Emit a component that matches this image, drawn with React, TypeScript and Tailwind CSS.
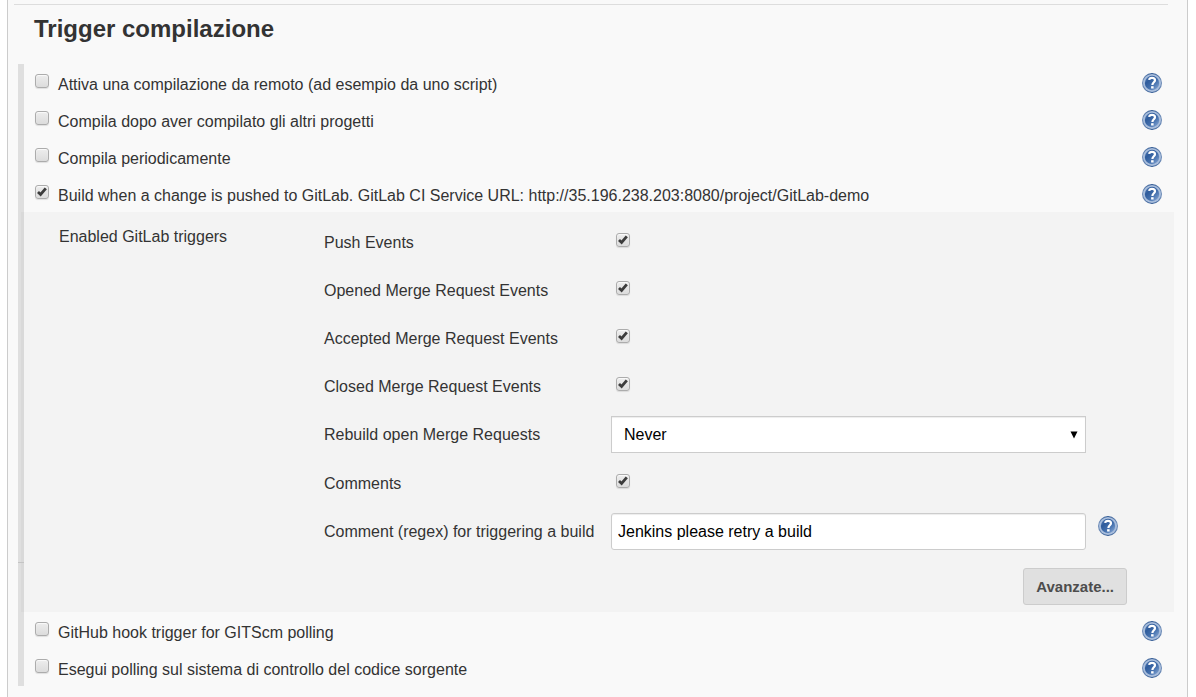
import { useState } from "react";
import type { ReactNode } from "react";

function HelpIcon({ id }: { id: string }) {
  return (
    <svg viewBox="0 0 20 20" className="block size-5" aria-hidden="true">
      <defs>
        <linearGradient id={`${id}-disc`} x1="0" y1="0" x2="1" y2="1">
          <stop offset="0" stopColor="#5f86bd" />
          <stop offset="0.3" stopColor="#2f5c9c" />
          <stop offset="0.6" stopColor="#4571ae" />
          <stop offset="1" stopColor="#90aed8" />
        </linearGradient>
        <linearGradient id={`${id}-rim`} x1="0" y1="0" x2="1" y2="0">
          <stop offset="0" stopColor="#6f8db8" />
          <stop offset="0.5" stopColor="#2b5590" />
          <stop offset="1" stopColor="#6f8db8" />
        </linearGradient>
      </defs>
      <circle cx="10" cy="10" r="10" fill={`url(#${id}-rim)`} />
      <circle cx="10" cy="10" r="9" fill="#a9bedc" />
      <circle cx="10" cy="10" r="7.2" fill={`url(#${id}-disc)`} />
      <path
        d="M7.1 6.9C7.4 5.3 8.5 4.8 10 4.8C11.9 4.8 13 5.8 13 7.3C13 9.3 10.4 9.4 10.4 12"
        fill="none"
        stroke="#fff"
        strokeWidth="2.2"
      />
      <rect x="9.1" y="13.2" width="2.5" height="2.3" fill="#fff" />
    </svg>
  );
}

function HelpLink({ id, about }: { id: string; about: string }) {
  return (
    <a href={`#help-${id}`} aria-label={`Help for feature: ${about}`} className="shrink-0">
      <HelpIcon id={id} />
    </a>
  );
}

function Checkbox({ id, defaultChecked = false }: { id: string; defaultChecked?: boolean }) {
  const [checked, setChecked] = useState(defaultChecked);
  return (
    <span className="grid size-3.5 shrink-0">
      <input
        id={id}
        type="checkbox"
        checked={checked}
        onChange={(e) => setChecked(e.target.checked)}
        className="col-start-1 row-start-1 size-3.5 appearance-none rounded-[3px] border border-[#acacac] bg-linear-to-b from-[#ededed] to-[#dcdcdc] shadow-[0_1px_1px_rgba(0,0,0,0.1),inset_0_1px_1px_rgba(255,255,255,0.75)]"
      />
      {checked && (
        <svg viewBox="0 0 14 14" className="pointer-events-none col-start-1 row-start-1 size-3.5" aria-hidden="true">
          <path d="M3 7L5.6 9.5L10.8 3.4" fill="none" stroke="#3c3c3c" strokeWidth="2.8" />
        </svg>
      )}
    </span>
  );
}

function TriggerRow({ id, label, checked }: { id: string; label: string; checked?: boolean }) {
  return (
    <div className="flex h-[37px] items-start pr-3 pl-[11px]">
      <div className="pt-2.5">
        <Checkbox id={id} defaultChecked={checked} />
      </div>
      <label htmlFor={id} className="flex-1 pt-[9px] pl-[9px] leading-6">
        {label}
      </label>
      <div className="pt-[9px]">
        <HelpLink id={`${id}-help`} about={label} />
      </div>
    </div>
  );
}

function Setting({ id, label, children }: { id: string; label: string; children: ReactNode }) {
  return (
    <div className="flex">
      <label htmlFor={id} className="w-[288px] shrink-0 pt-[13px] leading-6">
        {label}
      </label>
      <div className="min-h-12 min-w-0 flex-1 py-1.5">{children}</div>
    </div>
  );
}

function EventSetting({ id, label }: { id: string; label: string }) {
  return (
    <Setting id={id} label={label}>
      <div className="pt-[9px] pl-1">
        <Checkbox id={id} defaultChecked />
      </div>
    </Setting>
  );
}

const events = [
  { id: "push", label: "Push Events" },
  { id: "opened", label: "Opened Merge Request Events" },
  { id: "accepted", label: "Accepted Merge Request Events" },
  { id: "closed", label: "Closed Merge Request Events" },
];

function GitLabPanel() {
  return (
    <div className="relative -ml-[3px] bg-black/[0.024] pt-1.5 pr-[47px] pb-[7px] pl-[38px]">
      <span className="absolute bottom-[49px] -left-[3px] h-px w-1.5 bg-[#c4c4c4]" />
      <div className="flex">
        <div className="w-[265px] shrink-0 pt-[7px] leading-6">Enabled GitLab triggers</div>
        <div className="min-w-0 flex-1">
          {events.map((e) => (
            <EventSetting key={e.id} id={e.id} label={e.label} />
          ))}
          <Setting id="rebuild" label="Rebuild open Merge Requests">
            <div className="mr-[41px] -ml-px grid items-center">
              <select
                id="rebuild"
                defaultValue="Never"
                className="col-start-1 row-start-1 h-[37px] w-full appearance-none border border-[#ccc] bg-white px-3 pt-px text-black shadow-[inset_0_1px_1px_rgba(0,0,0,0.075)]"
              >
                <option>Never</option>
                <option>On push to source branch</option>
                <option>On push to source or target branch</option>
              </select>
              <svg
                viewBox="0 0 8 8"
                className="pointer-events-none col-start-1 row-start-1 mr-2 size-2 justify-self-end"
                aria-hidden="true"
              >
                <path d="M0.5 0.5H7.5L4 7.5Z" fill="#000" />
              </svg>
            </div>
          </Setting>
          <EventSetting id="comments" label="Comments" />
          <Setting id="regex" label="Comment (regex) for triggering a build">
            <div className="mr-[9px] -ml-px flex items-start gap-3">
              <input
                id="regex"
                type="text"
                defaultValue="Jenkins please retry a build"
                className="h-[37px] min-w-0 flex-1 rounded-[3px] border border-[#ccc] bg-white px-1.5 text-black shadow-[inset_0_1px_1px_rgba(0,0,0,0.075)]"
              />
              <div className="pt-[3px]">
                <HelpLink id="regex-help" about="Comment (regex) for triggering a build" />
              </div>
            </div>
          </Setting>
        </div>
      </div>
      <div className="flex justify-end pt-3">
        <button
          type="button"
          className="h-[37px] rounded-[3px] border border-[#ccc] bg-[#e0e0e0] px-3 pt-px text-[15px] font-bold text-[#4d4d4d]"
        >
          Avanzate...
        </button>
      </div>
    </div>
  );
}

export default function App() {
  return (
    <div className="min-h-screen bg-white pr-2 pl-[7px] font-['Liberation_Sans',Arial,sans-serif] text-base text-[#333]">
      <main className="min-h-screen border-x border-[#ccc] bg-[#f9f9f9] pt-1 pr-[13px] pb-[11px] pl-2.5">
        <hr className="mr-1.5 -ml-1 border-t border-[#ddd]" />
        <h1 className="pt-2 pb-[19px] pl-4 text-2xl font-bold">Trigger compilazione</h1>
        <section className="border-l-[6px] border-[#dfdfdf]">
          <TriggerRow id="remote" label="Attiva una compilazione da remoto (ad esempio da uno script)" />
          <TriggerRow id="upstream" label="Compila dopo aver compilato gli altri progetti" />
          <TriggerRow id="timer" label="Compila periodicamente" />
          <TriggerRow
            id="gitlab"
            checked
            label="Build when a change is pushed to GitLab. GitLab CI Service URL: http://35.196.238.203:8080/project/GitLab-demo"
          />
          <GitLabPanel />
          <TriggerRow id="github" label="GitHub hook trigger for GITScm polling" />
          <TriggerRow id="scm" label="Esegui polling sul sistema di controllo del codice sorgente" />
        </section>
      </main>
    </div>
  );
}
